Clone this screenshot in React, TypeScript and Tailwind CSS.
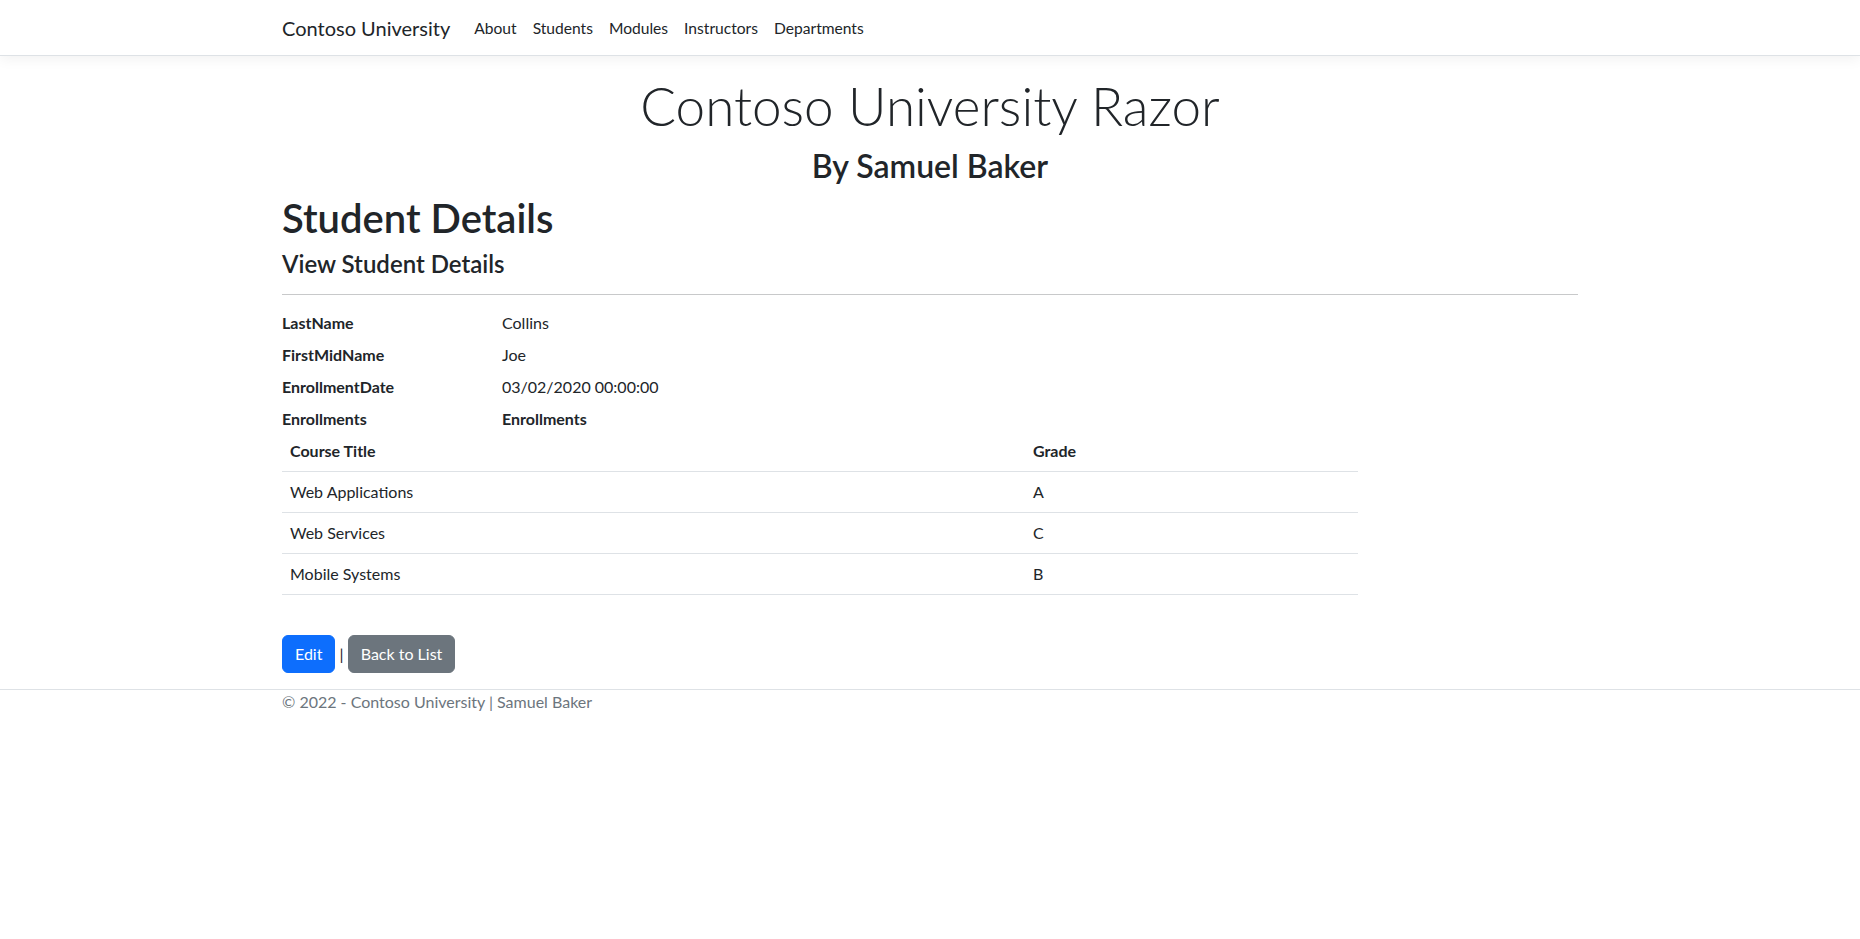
import React from "react";

const navLinks = ["About", "Students", "Modules", "Instructors", "Departments"];

const details = [
  { label: "LastName", value: "Collins" },
  { label: "FirstMidName", value: "Joe" },
  { label: "EnrollmentDate", value: "03/02/2020 00:00:00" },
];

const enrollments = [
  { title: "Web Applications", grade: "A" },
  { title: "Web Services", grade: "C" },
  { title: "Mobile Systems", grade: "B" },
];

export default function App() {
  return (
    <div className="min-h-screen bg-white text-[#212529] font-['Segoe_UI',Lato,sans-serif] text-base leading-6">
      {/* Navbar */}
      <header className="mb-4 border-b border-[#dee2e6] bg-white shadow-[0_4px_12px_rgba(0,0,0,0.05)]">
        <nav className="mx-auto flex h-[55px] w-[1320px] items-center px-3">
          <a href="#" className="mr-4 py-[5px] text-xl leading-[30px] text-[#212529]">
            Contoso University
          </a>
          <ul className="flex">
            {navLinks.map((link) => (
              <li key={link}>
                <a href="#" className="block px-2 py-2 text-[15.6px] text-[#212529]">
                  {link}
                </a>
              </li>
            ))}
          </ul>
        </nav>
      </header>

      <div className="mx-auto w-[1320px] px-3">
        <main role="main" className="pb-4">
          <div className="text-center">
            <h1 className="mb-2 text-[53px] font-light leading-[67.2px]">Contoso University Razor</h1>
            <h2 className="mb-2 text-[32px] font-semibold leading-[1.2]">By Samuel Baker</h2>
          </div>

          <h1 className="mb-2 text-[40px] font-semibold leading-[1.2]">Student Details</h1>

          <div>
            <h4 className="mb-2 text-2xl font-semibold leading-[1.2]">View Student Details</h4>
            <hr className="my-4 border-t border-[#c8c9ca]" />

            <dl className="grid grid-cols-[220px_1fr]">
              {details.map((d) => (
                <React.Fragment key={d.label}>
                  <dt className="mb-2 font-bold">{d.label}</dt>
                  <dd className="mb-2">{d.value}</dd>
                </React.Fragment>
              ))}
              <dt className="font-bold">Enrollments</dt>
              <dd className="font-bold">Enrollments</dd>
            </dl>

            <table className="mb-4 w-[1076px] border-collapse text-left">
              <thead>
                <tr className="border-b border-[#dee2e6]">
                  <th className="w-[743px] p-2 font-bold">Course Title</th>
                  <th className="p-2 font-bold">Grade</th>
                </tr>
              </thead>
              <tbody>
                {enrollments.map((e) => (
                  <tr key={e.title} className="border-b border-[#dee2e6]">
                    <td className="p-2">{e.title}</td>
                    <td className="p-2">{e.grade}</td>
                  </tr>
                ))}
              </tbody>
            </table>
          </div>

          <div className="mt-10">
            <a href="#" className="inline-block rounded-md border border-[#0d6efd] bg-[#0d6efd] px-3 py-[6px] text-white">
              Edit
            </a>{" "}
            |{" "}
            <a href="#" className="inline-block rounded-md border border-[#6c757d] bg-[#6c757d] px-3 py-[6px] text-white">
              Back to List
            </a>
          </div>
        </main>
      </div>

      <footer className="border-t border-[#dee2e6] text-[#6c757d]">
        <div className="mx-auto w-[1320px] px-3">&copy; 2022 - Contoso University | Samuel Baker</div>
      </footer>
    </div>
  );
}
